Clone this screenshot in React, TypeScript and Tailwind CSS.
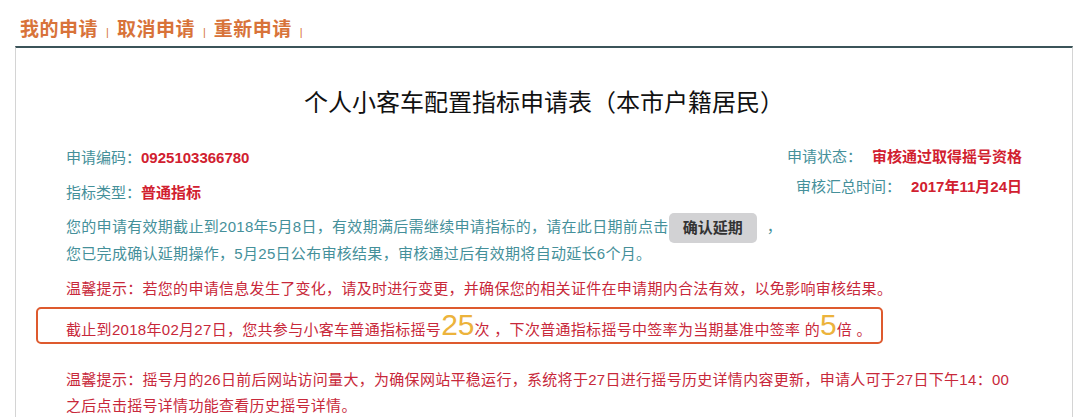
import React from 'react';

const font = { fontFamily: '"Liberation Sans", "Noto Sans CJK SC", sans-serif' };

const navItems = ['我的申请', '取消申请', '重新申请'];

export default function App() {
  return (
    <div className="w-[1080px] h-[417px] overflow-hidden bg-white" style={font}>
      {/* top tabs */}
      <div className="h-[46px] pl-[20px] pt-[14px] flex items-center text-[#d8733a]">
        {navItems.map((item) => (
          <span key={item} className="flex items-center">
            <span className="text-[19px] font-bold leading-[28px] tracking-[0.5px]">{item}</span>
            <span className="mx-[8px] text-[11px] leading-[28px] mt-[4px]">|</span>
          </span>
        ))}
      </div>

      {/* form card */}
      <div className="ml-[15px] w-[1058px] h-[371px] border-t-2 border-t-[#3b5459] border-x border-x-[#d4d4d4] px-[50px] pt-[39px]">
        <h1 className="text-center text-[24px] leading-[32px] text-[#111] font-normal">
          个人小客车配置指标申请表（本市户籍居民）
        </h1>

        <div className="mt-[27px] flex justify-between text-[15px]">
          <div className="flex flex-col gap-[11px] leading-[24px]">
            <div>
              <span className="text-[#45909a]">申请编码：</span>
              <span className="text-[#d1202f] font-bold">0925103366780</span>
            </div>
            <div>
              <span className="text-[#45909a]">指标类型：</span>
              <span className="text-[#d1202f] font-bold">普通指标</span>
            </div>
          </div>
          <div className="-mt-[1px] flex flex-col items-end gap-[6px] leading-[24px]">
            <div>
              <span className="text-[#45909a]">申请状态：</span>
              <span className="ml-[10px] text-[#d1202f] font-bold">审核通过取得摇号资格</span>
            </div>
            <div>
              <span className="text-[#45909a]">审核汇总时间：</span>
              <span className="ml-[10px] text-[#d1202f] font-bold">2017年11月24日</span>
            </div>
          </div>
        </div>

        <div className="mt-[9px] text-[15px] leading-[26px] text-[#45909a] tracking-[0.3px]">
          <p>
            您的申请有效期截止到2018年5月8日，有效期满后需继续申请指标的，请在此日期前点击
            <span className="inline-block align-middle -my-[2px] h-[30px] w-[88px] leading-[30px] rounded-[5px] bg-[#d2d2d4] text-center text-[#333] font-bold tracking-normal">
              确认延期
            </span>
            <span className="ml-[10px]">，</span>
          </p>
          <p>您已完成确认延期操作，5月25日公布审核结果，审核通过后有效期将自动延长6个月。</p>
        </div>

        <p className="mt-[9px] text-[15px] leading-[26px] text-[#c8283a] tracking-[0.3px]">
          温馨提示：若您的申请信息发生了变化，请及时进行变更，并确保您的相关证件在申请期内合法有效，以免影响审核结果。
        </p>

        <div className="mt-[5px] -ml-[30px] w-[847px] h-[37px] border-2 border-[#de5a2e] rounded-[5px] pl-[28px] flex items-center text-[15px] text-[#c8283a] tracking-[0.3px]">
          <span className="leading-[20px] mt-[4px]">
            截止到2018年02月27日，您共参与小客车普通指标摇号
            <span className="text-[30px] leading-[20px] text-[#ecb33c] tracking-normal">25</span>
            次 ，下次普通指标摇号中签率为当期基准中签率 的
            <span className="text-[30px] leading-[20px] text-[#ecb33c] tracking-normal">5</span>
            倍 。
          </span>
        </div>

        <p className="mt-[23px] text-[15px] leading-[26px] text-[#c8283a] tracking-[0.3px]">
          温馨提示：摇号月的26日前后网站访问量大，为确保网站平稳运行，系统将于27日进行摇号历史详情内容更新，申请人可于27日下午14：00
          <br />
          之后点击摇号详情功能查看历史摇号详情。
        </p>
      </div>
    </div>
  );
}
